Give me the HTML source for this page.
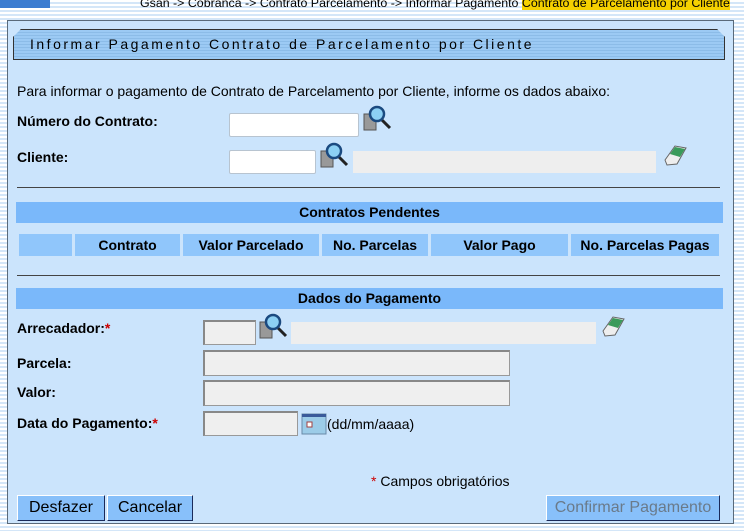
<!DOCTYPE html>
<html><head><meta charset="utf-8"><style>
*{margin:0;padding:0;box-sizing:border-box}
body{width:744px;height:531px;overflow:hidden;position:relative;font-family:"Liberation Sans",Arial,sans-serif;
background:repeating-linear-gradient(#ffffff 0 2px,#d4e6f8 2px 4px);}
.a{position:absolute}
.panel{left:7px;top:20px;width:727px;height:504px;background:#cbe4fc;border:1px solid #5a6a7a}
.lbl{font-size:14px;font-weight:bold;color:#000}
.t{font-size:14px;color:#000}
.inp{background:#fff;border:1px solid #b8c4d0;border-radius:2px}
.gr{background:#eeeeee}
.inp2{background:#efefef;border:1px solid #999;border-top:2px solid #888;border-left:2px solid #888}
.bar{background:#7ab8fa;font-size:14px;font-weight:bold;text-align:center;line-height:21px}
.th{background:#90c6fb;font-size:14px;font-weight:bold;text-align:center;line-height:22px;top:234px;height:22px}
.hr{left:17px;width:703px;height:1px;background:#444}
.btn{background:#88c0fa;border:1px solid #1a2a5a;border-top-color:#fff;border-left-color:#fff;font-size:16px;text-align:center;line-height:23px;top:495px;height:26px}
.req{color:#c00}
</style></head><body>
<div class="a" style="left:0;top:0;width:50px;height:8px;background:#3c7cd0"></div>
<div class="a" style="left:140px;top:-4px;font-size:12.4px;white-space:nowrap">Gsan -&gt; Cobranca -&gt; Contrato Parcelamento -&gt; Informar Pagamento <span style="background:#f5d000">Contrato de Parcelamento por Cliente</span></div>
<div class="a panel"></div>
<div class="a" style="left:13px;top:29px;width:712px;height:31px;background:repeating-linear-gradient(#9ccaf4 0 2px,#8cbce8 2px 3px);border:1px solid #333;border-radius:8px 8px 0 0;clip-path:polygon(8px 0,calc(100% - 8px) 0,100% 8px,100% 100%,0 100%,0 8px)"></div>
<div class="a" style="left:13px;top:29px;width:712px;height:31px;border:1px solid #333;clip-path:polygon(8px 0,calc(100% - 8px) 0,100% 8px,100% 100%,0 100%,0 8px)"></div>
<div class="a" style="left:30px;top:36px;font-size:14px;letter-spacing:2.5px">Informar Pagamento Contrato de Parcelamento por Cliente</div>

<div class="a t" style="left:17px;top:83px">Para informar o pagamento de Contrato de Parcelamento por Cliente, informe os dados abaixo:</div>
<div class="a lbl" style="left:17px;top:113px">Número do Contrato:</div>
<div class="a inp" style="left:229px;top:113px;width:130px;height:24px"></div>
<svg class="a" style="left:362px;top:104px" width="32" height="30" viewBox="0 0 32 30"><rect x="2" y="10" width="12" height="16" fill="#999" stroke="#555"/><line x1="18" y1="14" x2="28" y2="24" stroke="#222" stroke-width="3"/><circle cx="15" cy="10" r="7" fill="#8cd0f4" stroke="#1b4a80" stroke-width="2.5"/></svg>
<div class="a lbl" style="left:17px;top:149px">Cliente:</div>
<div class="a inp" style="left:229px;top:150px;width:87px;height:24px"></div>
<svg class="a" style="left:319px;top:141px" width="32" height="30" viewBox="0 0 32 30"><rect x="2" y="10" width="12" height="16" fill="#999" stroke="#555"/><line x1="18" y1="14" x2="28" y2="24" stroke="#222" stroke-width="3"/><circle cx="15" cy="10" r="7" fill="#8cd0f4" stroke="#1b4a80" stroke-width="2.5"/></svg>
<div class="a gr" style="left:353px;top:151px;width:303px;height:22px"></div>
<svg class="a" style="left:661px;top:142px" width="28" height="26" viewBox="0 0 28 26"><path d="M4 18 L14 4 L25 6 L16 22 L6 23 Z" fill="#eee" stroke="#666"/><path d="M9 12 L14 5 L24 7 L19 15 Z" fill="#3a9a5a"/></svg>

<div class="a hr" style="top:187px"></div>
<div class="a bar" style="left:16px;top:202px;width:707px;height:21px">Contratos Pendentes</div>
<div class="a th" style="left:19px;width:53px"></div>
<div class="a th" style="left:75px;width:105px">Contrato</div>
<div class="a th" style="left:183px;width:136px">Valor Parcelado</div>
<div class="a th" style="left:322px;width:106px">No. Parcelas</div>
<div class="a th" style="left:431px;width:137px">Valor Pago</div>
<div class="a th" style="left:571px;width:148px">No. Parcelas Pagas</div>
<div class="a hr" style="top:275px"></div>
<div class="a bar" style="left:16px;top:288px;width:707px;height:21px">Dados do Pagamento</div>

<div class="a lbl" style="left:17px;top:320px">Arrecadador:<span class="req">*</span></div>
<div class="a inp2" style="left:203px;top:320px;width:53px;height:25px"></div>
<svg class="a" style="left:258px;top:312px" width="32" height="30" viewBox="0 0 32 30"><rect x="2" y="10" width="12" height="16" fill="#999" stroke="#555"/><line x1="18" y1="14" x2="28" y2="24" stroke="#222" stroke-width="3"/><circle cx="15" cy="10" r="7" fill="#8cd0f4" stroke="#1b4a80" stroke-width="2.5"/></svg>
<div class="a gr" style="left:291px;top:322px;width:305px;height:22px"></div>
<svg class="a" style="left:599px;top:313px" width="28" height="26" viewBox="0 0 28 26"><path d="M4 18 L14 4 L25 6 L16 22 L6 23 Z" fill="#eee" stroke="#666"/><path d="M9 12 L14 5 L24 7 L19 15 Z" fill="#3a9a5a"/></svg>
<div class="a lbl" style="left:17px;top:355px">Parcela:</div>
<div class="a inp2" style="left:203px;top:350px;width:307px;height:26px"></div>
<div class="a lbl" style="left:17px;top:384px">Valor:</div>
<div class="a inp2" style="left:203px;top:380px;width:307px;height:26px"></div>
<div class="a lbl" style="left:17px;top:415px">Data do Pagamento:<span class="req">*</span></div>
<div class="a inp2" style="left:203px;top:411px;width:95px;height:25px"></div>
<svg class="a" style="left:301px;top:413px" width="26" height="22" viewBox="0 0 26 22"><rect x="1" y="1" width="24" height="20" fill="#9ccce8" stroke="#6a8aa8"/><rect x="1" y="1" width="24" height="3" fill="#3a5a9a"/><rect x="6" y="9" width="5" height="5" fill="#fff" stroke="#a04040"/></svg>
<div class="a t" style="left:327px;top:416px">(dd/mm/aaaa)</div>

<div class="a t" style="left:371px;top:473px"><span class="req">*</span> Campos obrigatórios</div>
<div class="a btn" style="left:17px;width:88px">Desfazer</div>
<div class="a btn" style="left:107px;width:86px">Cancelar</div>
<div class="a btn" style="left:546px;width:174px;color:#6a7a8a">Confirmar Pagamento</div>
</body></html>
